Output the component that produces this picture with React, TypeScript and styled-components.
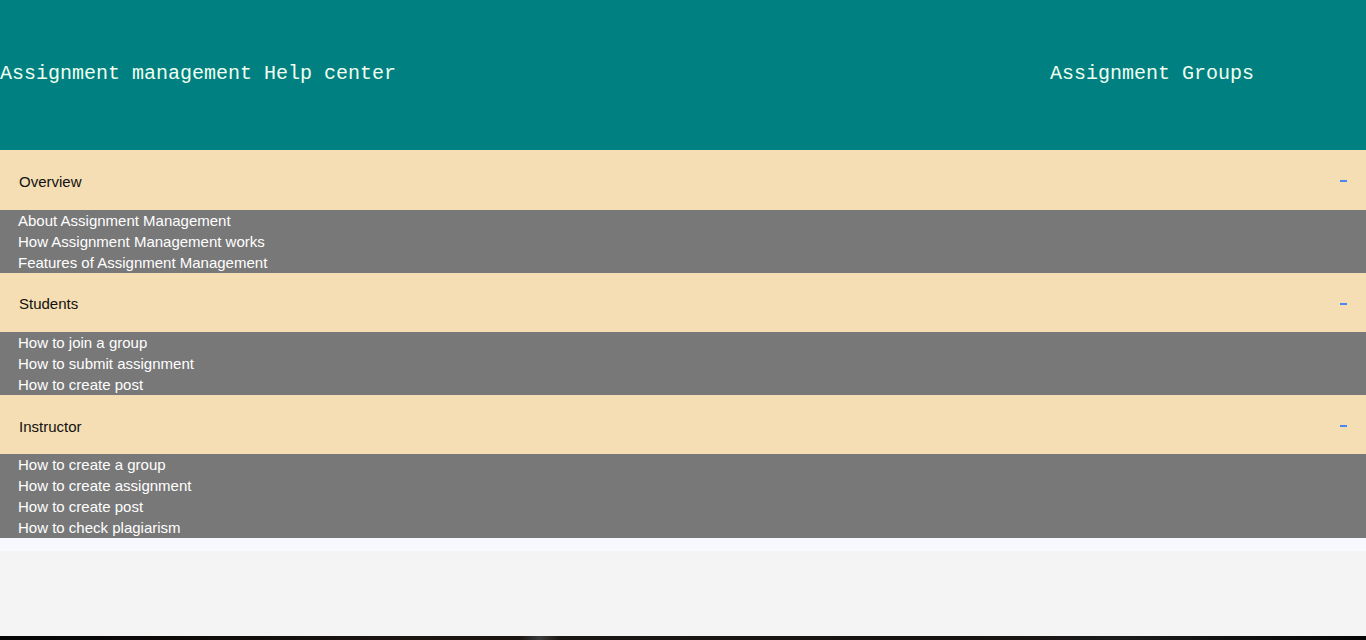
import React from "react";
import styled, { createGlobalStyle } from "styled-components";

const Global = createGlobalStyle`
  html, body { margin: 0; padding: 0; background: #f4f4f4; }
  body { font-family: "Liberation Sans", Arial, sans-serif; }
`;

const Page = styled.div`
  display: flex;
  flex-direction: column;
  min-height: 640px;
  background: #f4f4f4;
`;

const Header = styled.header`
  height: 150.3px;
  background: #008080;
  display: flex;
  align-items: center;
  justify-content: space-between;
  padding-right: 112px;
  padding-bottom: 3px;
  box-sizing: border-box;
  font-family: "Liberation Mono", "Courier New", monospace;
  font-size: 20px;
  color: #f0fff0;
`;

const HeaderText = styled.span`
  white-space: pre;
`;

const Section = styled.section`
  display: flex;
  flex-direction: column;
`;

const SectionHead = styled.div`
  height: 59.3px;
  background: #f5deb3;
  display: flex;
  align-items: center;
  justify-content: space-between;
  padding: 3px 19px 0 19px;
  box-sizing: border-box;
  font-size: 15px;
  color: #111;
`;

const Minus = styled.span`
  width: 7px;
  height: 2px;
  background: #4a86f5;
  margin-top: 0px;
`;

const Panel = styled.div`
  background: #787878;
  padding: 0 18px;
  display: flex;
  flex-direction: column;
`;

const Item = styled.div`
  color: #ffffff;
  font-size: 15px;
  line-height: 21px;
  height: 21px;
`;

const Spacer = styled.div`
  height: 13px;
  background: #f8f9ff;
`;

const Filler = styled.div`
  flex: 1;
  background: #f4f4f4;
`;

const BottomStrip = styled.div`
  height: 4px;
  background: linear-gradient(
    90deg,
    #050505 0%,
    #0c0a09 12%,
    #1b1512 30%,
    #1a1410 38%,
    #3c3c3c 39.5%,
    #1a1614 41%,
    #161210 70%,
    #1a1a1a 82%,
    #050505 100%
  );
`;

const sections = [
  {
    title: "Overview",
    items: [
      "About Assignment Management",
      "How Assignment Management works",
      "Features of Assignment Management",
    ],
  },
  {
    title: "Students",
    items: ["How to join a group", "How to submit assignment", "How to create post"],
  },
  {
    title: "Instructor",
    items: [
      "How to create a group",
      "How to create assignment",
      "How to create post",
      "How to check plagiarism",
    ],
  },
];

export default function App() {
  return (
    <Page>
      <Global />
      <Header>
        <HeaderText>Assignment management Help center</HeaderText>
        <HeaderText>Assignment Groups</HeaderText>
      </Header>
      {sections.map((s) => (
        <Section key={s.title}>
          <SectionHead>
            <span>{s.title}</span>
            <Minus />
          </SectionHead>
          <Panel>
            {s.items.map((it) => (
              <Item key={it}>{it}</Item>
            ))}
          </Panel>
        </Section>
      ))}
      <Spacer />
      <Filler />
      <BottomStrip />
    </Page>
  );
}
